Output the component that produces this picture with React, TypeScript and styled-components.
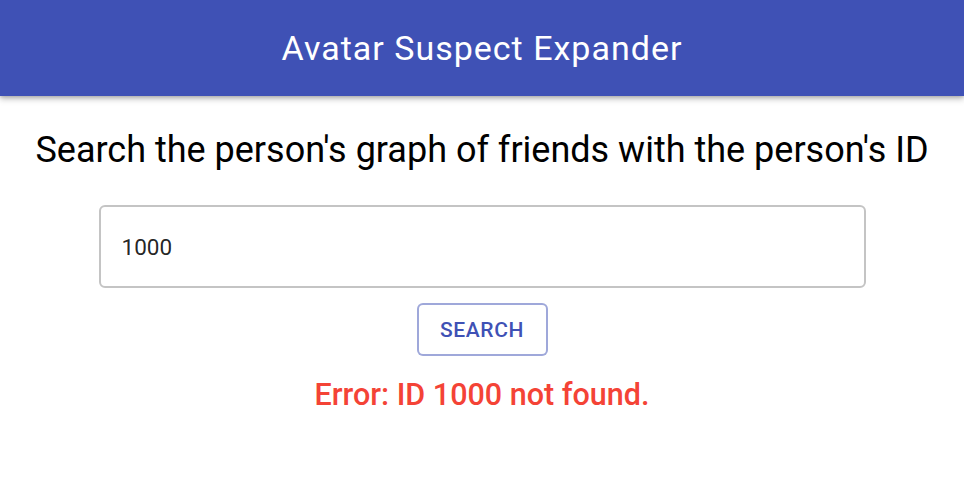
import React from "react";
import styled, { createGlobalStyle } from "styled-components";

const Global = createGlobalStyle`
  html, body { margin: 0; padding: 0; background: #fff; }
  body { font-family: Roboto, "Liberation Sans", sans-serif; }
  * { box-sizing: border-box; }
`;

const Header = styled.header`
  height: 96px;
  background: #3f51b5;
  display: flex;
  align-items: center;
  justify-content: center;
  box-shadow: 0 3px 6px rgba(0,0,0,0.25), 0 1px 3px rgba(0,0,0,0.15);
`;

const Title = styled.h1`
  margin: 0;
  color: #fff;
  font-size: 34px;
  font-weight: 400;
  letter-spacing: 1px;
`;

const Main = styled.main`
  display: flex;
  flex-direction: column;
  align-items: center;
  padding-top: 33px;
`;

const Heading = styled.h2`
  margin: 0;
  font-size: 36px;
  font-weight: 400;
  color: #000;
  line-height: 1.2;
`;

const Field = styled.div`
  margin-top: 33px;
  width: 767px;
  height: 83px;
  border: 2px solid #c4c4c4;
  border-radius: 6px;
  display: flex;
  align-items: center;
  padding: 0 19px;
`;

const Input = styled.input`
  border: none;
  outline: none;
  width: 100%;
  font-family: Roboto, "Liberation Sans", sans-serif;
  font-size: 22.5px;
  color: rgba(0,0,0,0.87);
  background: transparent;
`;

const Button = styled.button`
  margin-top: 15px;
  width: 131px;
  height: 53px;
  border: 2px solid rgba(63,81,181,0.5);
  border-radius: 6px;
  background: #fff;
  color: #3f51b5;
  font-family: Roboto, "Liberation Sans", sans-serif;
  font-weight: 500;
  font-size: 21px;
  letter-spacing: 0.6px;
  text-transform: uppercase;
`;

const ErrorText = styled.p`
  margin: 21px 0 0;
  color: #f44336;
  font-size: 30.5px;
  font-weight: 500;
`;

export default function App() {
  return (
    <>
      <Global />
      <Header>
        <Title>Avatar Suspect Expander</Title>
      </Header>
      <Main>
        <Heading>Search the person's graph of friends with the person's ID</Heading>
        <Field>
          <Input defaultValue="1000" />
        </Field>
        <Button>Search</Button>
        <ErrorText>Error: ID 1000 not found.</ErrorText>
      </Main>
    </>
  );
}
